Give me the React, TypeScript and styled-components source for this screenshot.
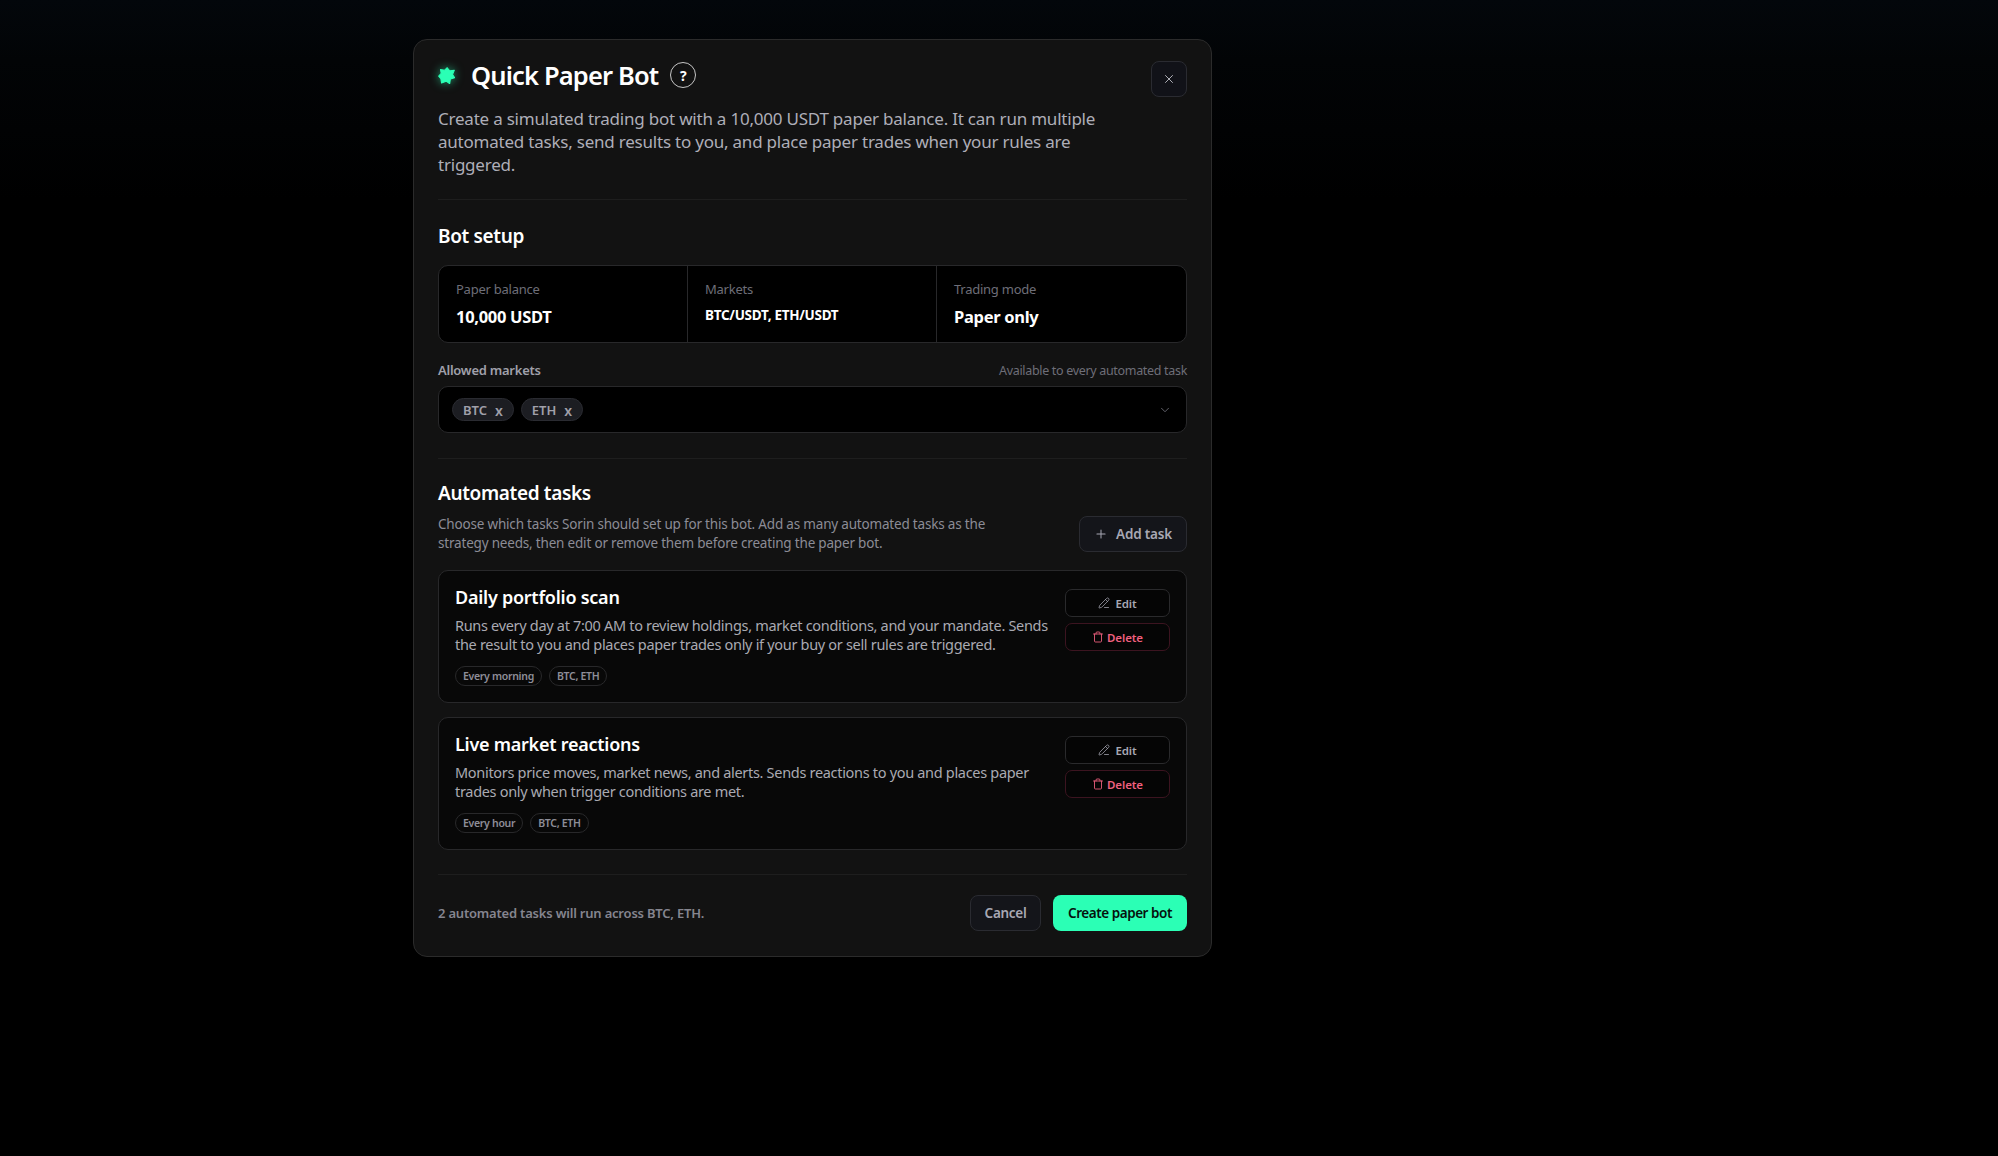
import React from 'react'
import styled, { createGlobalStyle } from 'styled-components'
import { ChevronDown, PencilLine, Plus, Trash, X } from 'lucide-react'

const GlobalStyle = createGlobalStyle`
  html, body {
    margin: 0;
    min-height: 100%;
    background: #000;
  }
  body {
    font-family: "Noto Sans", "Open Sans", sans-serif;
    color: #fff;
  }
`

const Page = styled.div`
  box-sizing: border-box;
  height: 1156px;
  padding: 39px 0 0 413px;
  overflow: hidden;
  background: linear-gradient(180deg, #03070b 0, #020406 60px, #000 200px);
`

const Modal = styled.section`
  box-sizing: border-box;
  position: relative;
  width: 799px;
  height: 918px;
  padding: 18px 24px 0;
  background: #121212;
  border: 1px solid #2b2b2b;
  border-radius: 14px;
`

const TitleRow = styled.div`
  display: flex;
  align-items: center;
  height: 34px;
`

const Logo = styled.svg`
  width: 17px;
  height: 17px;
  margin-right: 16px;
  filter: drop-shadow(0 0 5px rgba(43, 255, 181, 0.55));
`

const Title = styled.h1`
  margin: 0 12px 0 0;
  font-size: 25.5px;
  line-height: 34px;
  font-weight: 600;
  letter-spacing: -0.85px;
`

const HelpBadge = styled.span`
  box-sizing: border-box;
  width: 26px;
  height: 26px;
  border: 1px solid #c6c6c6;
  border-radius: 50%;
  display: flex;
  align-items: center;
  justify-content: center;
  font-size: 14px;
  font-weight: 700;
`

const CloseButton = styled.button`
  box-sizing: border-box;
  position: absolute;
  top: 21px;
  right: 24px;
  width: 36px;
  height: 36px;
  padding: 0;
  display: flex;
  align-items: center;
  justify-content: center;
  color: #c4c5cc;
  background: #111218;
  border: 1px solid #2a2b31;
  border-radius: 8px;
`

const Lead = styled.p`
  margin: 15px 0 0;
  max-width: 690px;
  font-size: 17px;
  line-height: 23px;
  letter-spacing: -0.22px;
  color: #aeaeb8;
`

const Divider = styled.div<{ $gap: number }>`
  height: 1px;
  margin-top: ${(p) => p.$gap}px;
  background: #1e1e1e;
`

const SectionTitle = styled.h2<{ $gap: number }>`
  margin: ${(p) => p.$gap}px 0 0;
  font-size: 19px;
  line-height: 28px;
  font-weight: 600;
  letter-spacing: -0.35px;
`

const StatGrid = styled.div`
  box-sizing: border-box;
  display: grid;
  grid-template-columns: repeat(3, 1fr);
  height: 78px;
  margin-top: 15px;
  background: #000;
  border: 1px solid #28282a;
  border-radius: 10px;
`

const Stat = styled.div`
  padding: 13px 17px 0;
  &:not(:last-child) {
    border-right: 1px solid #28282a;
  }
`

const StatLabel = styled.div`
  font-size: 13px;
  line-height: 20px;
  letter-spacing: -0.25px;
  color: #6e6e78;
`

const StatValue = styled.div<{ $small?: boolean }>`
  height: 28px;
  margin-top: 4px;
  font-size: ${(p) => (p.$small ? 13.5 : 16.5)}px;
  line-height: ${(p) => (p.$small ? 25 : 28)}px;
  letter-spacing: ${(p) => (p.$small ? -0.28 : -0.3)}px;
  font-weight: 700;
`

const FieldHead = styled.div`
  display: flex;
  justify-content: space-between;
  align-items: center;
  height: 20px;
  margin-top: 17px;
`

const FieldLabel = styled.span`
  font-size: 13px;
  font-weight: 600;
  letter-spacing: -0.25px;
  color: #a0a0aa;
`

const FieldHint = styled.span`
  font-size: 12.5px;
  letter-spacing: -0.32px;
  color: #6e6e78;
`

const Select = styled.div`
  box-sizing: border-box;
  display: flex;
  align-items: center;
  gap: 7px;
  height: 47px;
  margin-top: 6px;
  padding: 0 14px 0 13px;
  background: #000;
  border: 1px solid #28282a;
  border-radius: 10px;
  svg {
    margin-left: auto;
    color: #6e6e78;
  }
`

const Chip = styled.span`
  box-sizing: border-box;
  display: inline-flex;
  align-items: center;
  height: 23px;
  padding: 0 10px;
  gap: 8px;
  font-size: 13px;
  font-weight: 600;
  color: #a0a0aa;
  background: #1c1d22;
  border: 1px solid #2a2b31;
  border-radius: 12px;
`

const ChipRemove = styled.span`
  font-size: 14px;
  line-height: 14px;
  padding-top: 3px;
`

const TasksHead = styled.div`
  display: flex;
  justify-content: space-between;
  align-items: flex-start;
  margin-top: 4px;
`

const TasksText = styled.p`
  margin: 4px 0 0;
  max-width: 580px;
  font-size: 13.5px;
  line-height: 19px;
  letter-spacing: -0.19px;
  color: #8c8c96;
`

const AddButton = styled.button`
  box-sizing: border-box;
  display: flex;
  align-items: center;
  justify-content: center;
  gap: 8px;
  width: 108px;
  height: 36px;
  margin-top: 5px;
  padding: 0;
  font: 600 13.5px "Noto Sans", sans-serif;
  letter-spacing: -0.2px;
  color: #a8a8b4;
  background: #14151a;
  border: 1px solid #2a2b31;
  border-radius: 8px;
`

const TaskList = styled.div`
  display: flex;
  flex-direction: column;
  gap: 14px;
  margin-top: 17px;
`

const TaskCard = styled.article`
  box-sizing: border-box;
  display: flex;
  justify-content: space-between;
  height: 133px;
  padding: 14px 16px 0;
  background: #080808;
  border: 1px solid #28282a;
  border-radius: 10px;
`

const TaskBody = styled.div`
  width: 616px;
`

const TaskTitle = styled.h3`
  margin: 0;
  font-size: 18px;
  line-height: 25px;
  font-weight: 600;
  letter-spacing: -0.25px;
`

const TaskText = styled.p`
  margin: 6px 0 0;
  font-size: 14.5px;
  line-height: 19px;
  letter-spacing: -0.31px;
  color: #aaaab2;
`

const TagRow = styled.div`
  display: flex;
  gap: 7px;
  margin-top: 12px;
`

const Tag = styled.span`
  box-sizing: border-box;
  height: 20px;
  padding: 0 7px;
  font-size: 10.5px;
  line-height: 18px;
  font-weight: 600;
  letter-spacing: -0.3px;
  color: #8e8e98;
  border: 1px solid #28282a;
  border-radius: 10px;
`

const TaskActions = styled.div`
  display: flex;
  flex-direction: column;
  gap: 6px;
  margin-top: 4px;
`

const ActionButton = styled.button<{ $danger?: boolean }>`
  box-sizing: border-box;
  display: flex;
  align-items: center;
  justify-content: center;
  gap: ${(p) => (p.$danger ? 3 : 5)}px;
  width: 105px;
  height: 28px;
  padding: 0;
  font: 600 11.5px "Noto Sans", sans-serif;
  letter-spacing: -0.1px;
  color: ${(p) => (p.$danger ? '#f0607f' : '#a8a8b4')};
  background: #050505;
  border: 1px solid ${(p) => (p.$danger ? '#3c1420' : '#2a2a2c')};
  border-radius: 7px;
`

const Footer = styled.footer`
  display: flex;
  align-items: center;
  justify-content: space-between;
  margin-top: 20px;
`

const FooterNote = styled.span`
  font-size: 13px;
  font-weight: 600;
  letter-spacing: -0.2px;
  color: #85858f;
`

const FooterActions = styled.div`
  display: flex;
  gap: 12px;
`

const CancelButton = styled.button`
  box-sizing: border-box;
  width: 71px;
  height: 36px;
  padding: 0;
  font: 600 13.5px "Noto Sans", sans-serif;
  letter-spacing: -0.3px;
  color: #a8a8b4;
  background: #14151a;
  border: 1px solid #2a2b31;
  border-radius: 8px;
`

const CreateButton = styled.button`
  box-sizing: border-box;
  width: 134px;
  height: 36px;
  padding: 0;
  font: 600 13.5px "Noto Sans", sans-serif;
  letter-spacing: -0.45px;
  color: #06120e;
  background: #2bffb5;
  border: none;
  border-radius: 8px;
`

const tasks = [
  {
    title: 'Daily portfolio scan',
    text: 'Runs every day at 7:00 AM to review holdings, market conditions, and your mandate. Sends the result to you and places paper trades only if your buy or sell rules are triggered.',
    when: 'Every morning',
  },
  {
    title: 'Live market reactions',
    text: 'Monitors price moves, market news, and alerts. Sends reactions to you and places paper trades only when trigger conditions are met.',
    when: 'Every hour',
  },
]

export default function App() {
  return (
    <Page>
      <GlobalStyle />
      <Modal>
        <TitleRow>
          <Logo viewBox="0 0 24 24">
            <path
              d="M13 1l3.500 4.500 6.500-1-2.500 6L23.500 15l-6 2-1 6.500-5-3.500L5 22.500l-1-6L1 13l3.500-4L3.500 3.500l6 1z"
              fill="#2bffb5"
              stroke="#2bffb5"
              strokeWidth={1.5}
              strokeLinejoin="round"
            />
          </Logo>
          <Title>Quick Paper Bot</Title>
          <HelpBadge>?</HelpBadge>
        </TitleRow>
        <CloseButton>
          <X size={14} strokeWidth={1.5} />
        </CloseButton>
        <Lead>
          Create a simulated trading bot with a 10,000 USDT paper balance. It can run multiple automated tasks, send
          results to you, and place paper trades when your rules are triggered.
        </Lead>
        <Divider $gap={23} />

        <SectionTitle $gap={22}>Bot setup</SectionTitle>
        <StatGrid>
          <Stat>
            <StatLabel>Paper balance</StatLabel>
            <StatValue>10,000 USDT</StatValue>
          </Stat>
          <Stat>
            <StatLabel>Markets</StatLabel>
            <StatValue $small>BTC/USDT, ETH/USDT</StatValue>
          </Stat>
          <Stat>
            <StatLabel>Trading mode</StatLabel>
            <StatValue>Paper only</StatValue>
          </Stat>
        </StatGrid>
        <FieldHead>
          <FieldLabel>Allowed markets</FieldLabel>
          <FieldHint>Available to every automated task</FieldHint>
        </FieldHead>
        <Select>
          <Chip>
            BTC <ChipRemove>x</ChipRemove>
          </Chip>
          <Chip>
            ETH <ChipRemove>x</ChipRemove>
          </Chip>
          <ChevronDown size={14} strokeWidth={1.5} />
        </Select>
        <Divider $gap={25} />

        <SectionTitle $gap={20}>Automated tasks</SectionTitle>
        <TasksHead>
          <TasksText>
            Choose which tasks Sorin should set up for this bot. Add as many automated tasks as the strategy needs, then
            edit or remove them before creating the paper bot.
          </TasksText>
          <AddButton>
            <Plus size={14} strokeWidth={1.75} />
            Add task
          </AddButton>
        </TasksHead>
        <TaskList>
          {tasks.map((task) => (
            <TaskCard key={task.title}>
              <TaskBody>
                <TaskTitle>{task.title}</TaskTitle>
                <TaskText>{task.text}</TaskText>
                <TagRow>
                  <Tag>{task.when}</Tag>
                  <Tag>BTC, ETH</Tag>
                </TagRow>
              </TaskBody>
              <TaskActions>
                <ActionButton>
                  <PencilLine size={12} strokeWidth={1.5} />
                  Edit
                </ActionButton>
                <ActionButton $danger>
                  <Trash size={12} strokeWidth={1.75} />
                  Delete
                </ActionButton>
              </TaskActions>
            </TaskCard>
          ))}
        </TaskList>
        <Divider $gap={24} />
        <Footer>
          <FooterNote>2 automated tasks will run across BTC, ETH.</FooterNote>
          <FooterActions>
            <CancelButton>Cancel</CancelButton>
            <CreateButton>Create paper bot</CreateButton>
          </FooterActions>
        </Footer>
      </Modal>
    </Page>
  )
}
